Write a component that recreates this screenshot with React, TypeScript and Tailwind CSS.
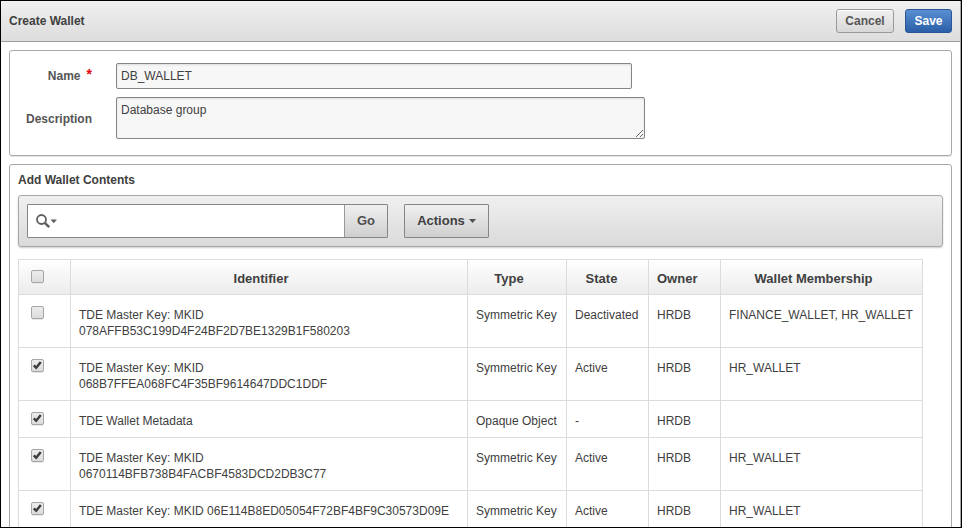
import { useState } from "react";

const contents = [
  { id: "078AFFB53C199D4F24BF2D7BE1329B1F580203", name: "TDE Master Key: MKID", type: "Symmetric Key", state: "Deactivated", owner: "HRDB", wallets: "FINANCE_WALLET, HR_WALLET", checked: false },
  { id: "068B7FFEA068FC4F35BF9614647DDC1DDF", name: "TDE Master Key: MKID", type: "Symmetric Key", state: "Active", owner: "HRDB", wallets: "HR_WALLET", checked: true },
  { id: "", name: "TDE Wallet Metadata", type: "Opaque Object", state: "-", owner: "HRDB", wallets: "", checked: true },
  { id: "0670114BFB738B4FACBF4583DCD2DB3C77", name: "TDE Master Key: MKID", type: "Symmetric Key", state: "Active", owner: "HRDB", wallets: "HR_WALLET", checked: true },
  { id: "06E114B8ED05054F72BF4BF9C30573D09E", name: "TDE Master Key: MKID", type: "Symmetric Key", state: "Active", owner: "HRDB", wallets: "HR_WALLET", checked: true, inline: true },
];

const columns = [
  { label: "Identifier", width: "w-[397px]", align: "pr-6" },
  { label: "Type", width: "w-[99px]", align: "pr-6" },
  { label: "State", width: "w-[82px]", align: "pr-5" },
  { label: "Owner", width: "w-[72px]", align: "text-left" },
  { label: "Wallet Membership", width: "w-[202px]", align: "pr-6" },
];

function Checkbox({ label, checked, onChange }: { label: string; checked: boolean; onChange: () => void }) {
  return (
    <span className="grid size-[13px]">
      <input
        type="checkbox"
        aria-label={label}
        checked={checked}
        onChange={onChange}
        className="col-start-1 row-start-1 size-[13px] appearance-none rounded-[2px] border border-[#a6a6a6] bg-linear-to-b from-[#ececec] to-[#dcdcdc] shadow-[0_1px_0_#e8e8e8]"
      />
      {checked && (
        <svg viewBox="0 0 13 13" className="pointer-events-none col-start-1 row-start-1 size-[13px]" fill="none" stroke="#3c3c3c" strokeWidth="2.4">
          <path d="M2.8 6.4 L5.2 8.8 L9.8 3" />
        </svg>
      )}
    </span>
  );
}

export default function App() {
  const [name, setName] = useState("DB_WALLET");
  const [description, setDescription] = useState("Database group");
  const [search, setSearch] = useState("");
  const [selected, setSelected] = useState(contents.map((item) => item.checked));

  const allSelected = selected.every(Boolean);
  const toggle = (index: number) => setSelected((prev) => prev.map((value, i) => (i === index ? !value : value)));
  const toggleAll = () => setSelected((prev) => prev.map(() => !allSelected));

  return (
    <div className="flex h-screen flex-col overflow-hidden border border-black bg-white font-['Liberation_Sans',Arial,sans-serif] text-xs text-[#404040]">
      <div className="flex min-h-0 flex-1 flex-col overflow-hidden border-r border-[#a8a8a8]">
        <header className="flex shrink-0 items-center border-b border-[#a0a0a0] bg-linear-to-b from-[#f0f0f0] to-[#dddddd] px-2 py-2">
          <h1 className="flex-1 font-bold text-[#404040]">Create Wallet</h1>
          <div className="flex gap-[11px]">
            <button type="button" className="h-6 w-[58px] rounded-[3px] border border-[#999] bg-linear-to-b from-[#f0f0f0] to-[#d8d8d8] font-bold text-[#555] shadow-[inset_0_1px_0_#fff]">
              Cancel
            </button>
            <button type="button" className="h-6 w-[47px] rounded-[3px] border border-[#2a5596] bg-linear-to-b from-[#5a8fd2] to-[#2a5fa8] font-bold text-white">
              Save
            </button>
          </div>
        </header>

        <main className="flex-1 space-y-2 overflow-hidden p-2">
          <section className="grid grid-cols-[82px_minmax(0,1fr)] items-center gap-x-6 gap-y-2 rounded-[3px] border border-[#a8a8a8] pt-3 pr-4 pb-4 shadow-[0_1px_1px_#e4e4e4]">
            <label htmlFor="name" className="flex items-start justify-end gap-1.5 leading-4 font-bold text-[#555]">
              Name <span className="text-sm leading-3 text-red-600">*</span>
            </label>
            <input
              id="name"
              required
              value={name}
              onChange={(e) => setName(e.target.value)}
              className="h-[26px] w-full max-w-[516px] rounded-xs border border-[#858585] bg-[#f7f7f7] px-1 shadow-[inset_0_1px_2px_#ddd]"
            />
            <label htmlFor="description" className="pt-0.5 text-right font-bold text-[#555]">
              Description
            </label>
            <textarea
              id="description"
              value={description}
              onChange={(e) => setDescription(e.target.value)}
              className="block h-[42px] w-full max-w-[529px] resize rounded-xs border border-[#858585] bg-[#f7f7f7] px-1 py-1 leading-4 shadow-[inset_0_1px_2px_#ddd]"
            />
          </section>

          <section className="rounded-[3px] border border-[#a8a8a8] p-2">
            <h2 className="mb-2 leading-[14px] font-bold">Add Wallet Contents</h2>

            <div className="mb-3 flex gap-4 rounded-[3px] border border-[#a8a8a8] bg-linear-to-b from-[#f0f0f0] to-[#dadada] p-2 shadow-[0_1px_2px_#ccc]">
              <div className="flex h-[34px] w-[361px] rounded-[1px] border border-[#858585] bg-white">
                <button type="button" aria-label="Search columns" className="flex w-9 items-center pl-2 text-[#606060]">
                  <svg viewBox="0 0 22 16" className="h-4 w-[22px]" fill="none" stroke="currentColor">
                    <circle cx="5.5" cy="6.5" r="4.5" strokeWidth="1.8" />
                    <path d="M8.8 9.8 L13.2 14.2" strokeWidth="2.6" />
                    <path d="M14.5 6.5 H21 L17.7 10.3 Z" fill="currentColor" stroke="none" />
                  </svg>
                </button>
                <input
                  type="text"
                  aria-label="Search"
                  value={search}
                  onChange={(e) => setSearch(e.target.value)}
                  className="min-w-0 flex-1 outline-none"
                />
                <button type="button" className="w-[43px] border-l border-[#999] bg-linear-to-b from-[#f0f0f0] to-[#cfcfcf] text-[13px] font-bold text-[#505050]">
                  Go
                </button>
              </div>
              <button type="button" className="flex h-[34px] w-[85px] items-center justify-center gap-1 rounded-[1px] border border-[#858585] bg-linear-to-b from-[#f0f0f0] to-[#cfcfcf] text-[13px] font-bold">
                Actions
                <svg viewBox="0 0 7 4" className="h-1 w-[7px]" fill="#505050">
                  <path d="M0 0 H7 L3.5 4 Z" />
                </svg>
              </button>
            </div>

            <table className="w-[905px] table-fixed border-collapse">
              <thead>
                <tr className="h-[35px] bg-linear-to-b from-white to-[#ebebeb]">
                  <th className="w-[52px] border border-[#dcdcdc] px-3 pb-0.5">
                    <Checkbox label="Select all" checked={allSelected} onChange={toggleAll} />
                  </th>
                  {columns.map((column) => (
                    <th key={column.label} className={`border border-[#dcdcdc] pt-1 pl-2 text-[13px] leading-4 font-bold ${column.width} ${column.align}`}>
                      {column.label}
                    </th>
                  ))}
                </tr>
              </thead>
              <tbody>
                {contents.map((item, index) => (
                  <tr key={index} className="align-top leading-4">
                    <td className="border border-[#dcdcdc] px-3 pt-[11px]">
                      <Checkbox label={`Select ${item.name} ${item.id}`} checked={selected[index]} onChange={() => toggle(index)} />
                    </td>
                    <td className="border border-[#dcdcdc] px-2 pt-3 pb-2">
                      {item.name} {item.id && !item.inline && <br />}
                      {item.id}
                    </td>
                    <td className="border border-[#dcdcdc] px-2 pt-3 pb-2 whitespace-nowrap">{item.type}</td>
                    <td className="border border-[#dcdcdc] px-2 pt-3 pb-2">{item.state}</td>
                    <td className="border border-[#dcdcdc] px-2 pt-3 pb-2">{item.owner}</td>
                    <td className="border border-[#dcdcdc] px-2 pt-3 pb-2 whitespace-nowrap">{item.wallets}</td>
                  </tr>
                ))}
              </tbody>
            </table>
          </section>
        </main>
      </div>
    </div>
  );
}
